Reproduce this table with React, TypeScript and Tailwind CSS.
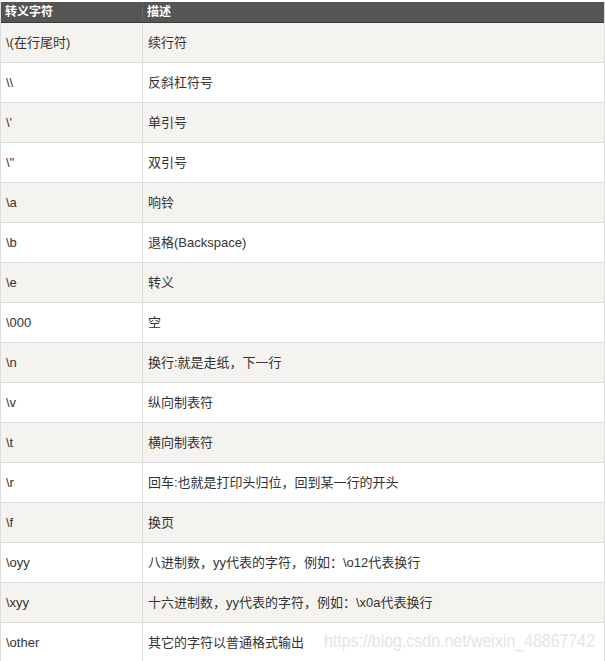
import React from "react";

const rows: [string, string][] = [
  ["\\(在行尾时)", "续行符"],
  ["\\\\", "反斜杠符号"],
  ["\\'", "单引号"],
  ["\\\"", "双引号"],
  ["\\a", "响铃"],
  ["\\b", "退格(Backspace)"],
  ["\\e", "转义"],
  ["\\000", "空"],
  ["\\n", "换行:就是走纸，下一行"],
  ["\\v", "纵向制表符"],
  ["\\t", "横向制表符"],
  ["\\r", "回车:也就是打印头归位，回到某一行的开头"],
  ["\\f", "换页"],
  ["\\oyy", "八进制数，yy代表的字符，例如：\\o12代表换行"],
  ["\\xyy", "十六进制数，yy代表的字符，例如：\\x0a代表换行"],
  ["\\other", "其它的字符以普通格式输出"],
];

export default function App() {
  return (
    <div
      className="relative w-[605px] h-[661px] overflow-hidden bg-white pt-[2px]"
      style={{ fontFamily: '"Liberation Sans", "Noto Sans CJK SC", sans-serif' }}
    >
      <div className="w-[605px] border-r border-l border-[#dcdcdc]">
        <div className="grid grid-cols-[142px_1fr] h-[21px] bg-[#555555] border-b border-[#3a3a3a] text-white text-[12px] font-bold leading-[20px]">
          <div className="pl-[4px] border-r border-[#666]">转义字符</div>
          <div className="pl-[4px]">描述</div>
        </div>
        {rows.map(([a, b], i) => (
          <div
            key={i}
            className={`grid grid-cols-[142px_1fr] h-[40px] border-b border-[#dcdcdc] text-[13px] text-[#333] leading-[39px] ${
              i % 2 === 0 ? "bg-[#f4f3ef]" : "bg-white"
            }`}
          >
            <div className="pl-[5px] border-r border-[#dcdcdc] whitespace-nowrap">{a}</div>
            <div className="pl-[5px] whitespace-nowrap">{b}</div>
          </div>
        ))}
      </div>
      <div
        className="absolute left-[324px] top-[628px] text-[18px] text-[#e4e4e4] whitespace-nowrap origin-left scale-x-[0.885]"
        style={{ fontFamily: '"Liberation Sans", sans-serif' }}
      >
        https://blog.csdn.net/weixin_48867742
      </div>
    </div>
  );
}
